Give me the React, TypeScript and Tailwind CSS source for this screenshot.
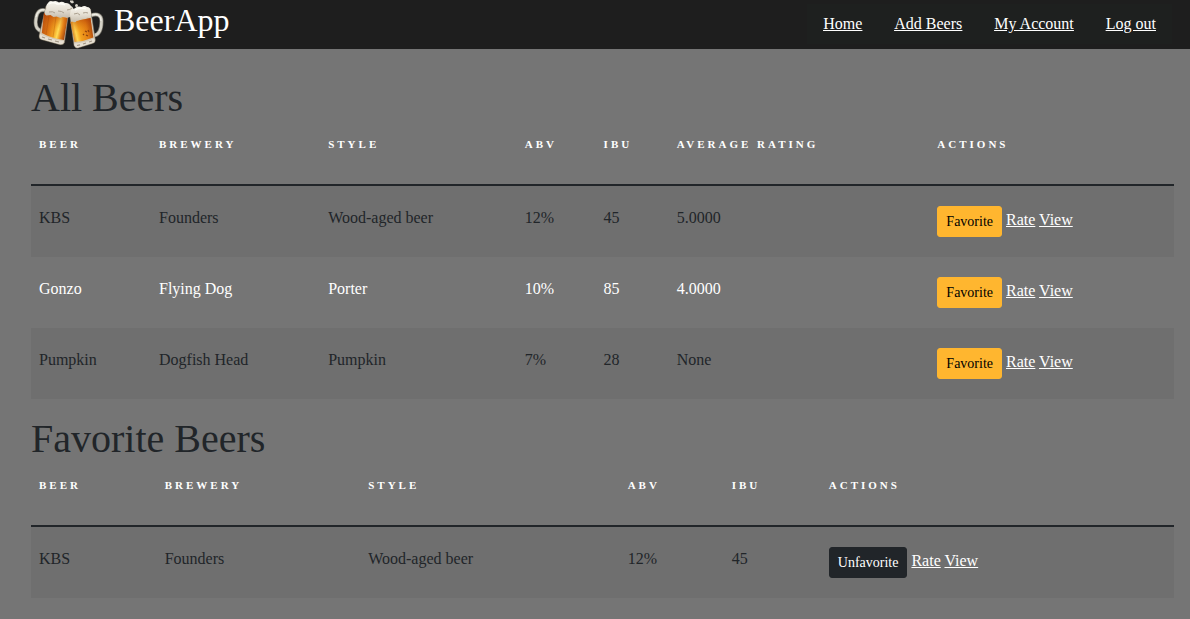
import React from "react";

type Beer = { name: string; brewery: string; style: string; abv: string; ibu: string; rating?: string };

const allBeers: Beer[] = [
  { name: "KBS", brewery: "Founders", style: "Wood-aged beer", abv: "12%", ibu: "45", rating: "5.0000" },
  { name: "Gonzo", brewery: "Flying Dog", style: "Porter", abv: "10%", ibu: "85", rating: "4.0000" },
  { name: "Pumpkin", brewery: "Dogfish Head", style: "Pumpkin", abv: "7%", ibu: "28", rating: "None" },
];

const favoriteBeers: Beer[] = [
  { name: "KBS", brewery: "Founders", style: "Wood-aged beer", abv: "12%", ibu: "45" },
];

function BeerMugs() {
  return (
    <svg viewBox="0 0 72 49" className="h-[49px] w-[72px] shrink-0" aria-hidden="true">
      <defs>
        <linearGradient id="ale-left" gradientUnits="userSpaceOnUse" x1="10" y1="24" x2="34" y2="30">
          <stop offset="0" stopColor="#b9500f" />
          <stop offset=".3" stopColor="#dc7413" />
          <stop offset=".55" stopColor="#f2a422" />
          <stop offset=".7" stopColor="#ffdc55" />
          <stop offset=".84" stopColor="#e8861a" />
          <stop offset="1" stopColor="#a84a10" />
        </linearGradient>
        <linearGradient id="ale-right" gradientUnits="userSpaceOnUse" x1="39" y1="33" x2="60" y2="28">
          <stop offset="0" stopColor="#c96512" />
          <stop offset=".22" stopColor="#ffd552" />
          <stop offset=".4" stopColor="#f4a31f" />
          <stop offset=".75" stopColor="#e17d13" />
          <stop offset="1" stopColor="#ad480c" />
        </linearGradient>
        <linearGradient id="ale-shade" x1="0" y1="0" x2="0" y2="1">
          <stop offset="0" stopColor="#b03c08" stopOpacity=".6" />
          <stop offset=".6" stopColor="#e07a10" stopOpacity="0" />
        </linearGradient>
        <linearGradient id="foam" x1="0" y1="0" x2="0" y2="1">
          <stop offset="0" stopColor="#f8f6ef" />
          <stop offset=".5" stopColor="#e6e0d4" />
          <stop offset="1" stopColor="#c4bbac" />
        </linearGradient>
      </defs>

      <path d="M14 10.500C9 9 5.500 11 4.300 17c-1.500 7-.3 12.500 5 14" fill="none" stroke="#77746b" strokeWidth="4" />
      <path d="M14 10.500C9 9 5.500 11 4.300 17c-1.500 7-.3 12.500 5 14" fill="none" stroke="#d5d2c7" strokeWidth="2.600" />
      <path d="M13 10C9 9 5.500 11 4 17" fill="none" stroke="#f6f5ee" strokeWidth="1" />
      <path d="M14 6 37 10 32.500 42.500Q31.500 45.500 28 44.700L9 39.500Q6.500 38.500 7.200 35z" fill="#d4c8b3" stroke="#756c5c" strokeWidth=".5" />
      <path d="M12 13 35.500 18 32 40Q20 38.500 9.800 33z" fill="url(#ale-left)" />
      <path d="M12 13 35.500 18 32 40Q20 38.500 9.800 33z" fill="url(#ale-shade)" />
      <path d="m17 16-3 19M24 17l-3 20" stroke="#9e4309" strokeWidth=".8" strokeOpacity=".35" />
      <path d="M8 34q12 6 24 7l-1 2q-1 2-4 1L9 39q-2-1-1-5z" fill="#e6dfd2" />
      <path d="m10 37 3 1m3 1 4 1m3 1 4 1" stroke="#a09483" strokeWidth="1.200" />

      <path d="M59 15.500C65 13 69.500 15 69.500 21c0 8-2 14-8 14.500" fill="none" stroke="#77746b" strokeWidth="4" />
      <path d="M59 15.500C65 13 69.500 15 69.500 21c0 8-2 14-8 14.500" fill="none" stroke="#d5d2c7" strokeWidth="2.600" />
      <path d="M60 15C65 13.500 69 15 69 21" fill="none" stroke="#f6f5ee" strokeWidth="1" />
      <path d="M37.500 14 58.500 9 63.300 39.500Q63.700 42.500 60.500 43.500L46 48Q43 48.700 42 45.500z" fill="#d4c8b3" stroke="#756c5c" strokeWidth=".5" />
      <path d="M38.500 22 58.500 18 61.300 37.500Q52 41.500 42.500 42z" fill="url(#ale-right)" />
      <path d="M38.500 22 58.500 18 61.300 37.500Q52 41.500 42.500 42z" fill="url(#ale-shade)" />
      <path d="M42 43.500q11-.5 20-5l.8 2q.2 2-2.300 2.500L46 47.500q-3 .5-4-4z" fill="#e6dfd2" />
      <path d="m45 45.500 3-.7m3-.8 3-1m3-1 3-1" stroke="#a09483" strokeWidth="1.200" />
      <path d="m53 31 2 1m1-2 1 2m-3 3 2 1m-5-2 1 1" stroke="#8a410e" strokeWidth="1.200" />

      <path d="M14.500 9q-1-4 1.500-6 1.500-3 5-1.500Q24 0 27 2.500q3-1.500 6 .5 4-.5 6 3 3.500 2 2 5.500.5 5-4.500 6l-5-1-3 1.500-4-1.500-3 .5-3-2-4 .5q-3-1-1-5.500z" fill="url(#foam)" />
      <path d="M17 12q4-1 6 1m3-2q4 0 6 2m3-3q3 0 5-2" fill="none" stroke="#aba08f" strokeWidth="1" />
      <path d="M17 4q4-3 8 0 5-1 8 1" fill="none" stroke="#fffef9" strokeWidth="1.500" />
      <path d="M38.500 12q0-3 4-3.500 3-3 7-1.500 3-2 5.500 0 3.500 0 3.500 3.500l1 5q-1 3-4 1.500-2 3-5 1l-3 2-3 1q-1 2-3 1-2.500-1-2-4-2.500-2-1-6z" fill="url(#foam)" />
      <path d="M42 14q4-2 6 1m3-2q3-1 5 0" fill="none" stroke="#aba08f" strokeWidth="1" />
      <path d="M43 10q5-3 11-1" fill="none" stroke="#fffef9" strokeWidth="1.300" />
      <path d="M38 .5h3l1 2-2 1-2-1.500z" fill="#d8d3c9" />
      <circle cx="44.500" cy="5.500" r="1.500" fill="#d8d3c9" />
    </svg>
  );
}

function BeerTable({ id, beers, favorites = false }: { id: string; beers: Beer[]; favorites?: boolean }) {
  const headings = favorites
    ? ["Beer", "Brewery", "Style", "ABV", "IBU", "Actions"]
    : ["Beer", "Brewery", "Style", "ABV", "IBU", "Average Rating", "Actions"];
  const columns = favorites
    ? ["w-[11%]", "w-[17.8%]", "w-[22.7%]", "w-[9.1%]", "w-[8.5%]", "w-auto"]
    : ["w-[10.5%]", "w-[14.8%]", "w-[17.2%]", "w-[6.9%]", "w-[6.4%]", "w-[22.8%]", "w-auto"];
  return (
    <table aria-labelledby={id} className="mt-2 w-full table-fixed border-separate border-spacing-0 text-left">
      <colgroup>{columns.map((width, i) => <col key={i} className={width} />)}</colgroup>
      <thead>
        <tr>
          {headings.map((heading) => (
            <th key={heading} scope="col" className="border-b-2 border-[#212529] px-2 pt-1.5 pb-8 text-[11px] leading-4 font-bold tracking-[3px] whitespace-nowrap text-white uppercase">
              {heading}
            </th>
          ))}
        </tr>
      </thead>
      <tbody>
        {beers.map((beer) => (
          <tr key={beer.name} className="align-top text-[#212529] odd:bg-[#6f6f6f] even:text-white">
            <td className="px-2 py-5">{beer.name}</td>
            <td className="px-2 py-5">{beer.brewery}</td>
            <td className="px-2 py-5">{beer.style}</td>
            <td className="px-2 py-5">{beer.abv}</td>
            <td className="px-2 py-5">{beer.ibu}</td>
            {!favorites && <td className="px-2 py-5">{beer.rating}</td>}
            <td className="px-2 py-5 whitespace-nowrap text-white">
              <button type="button" className={favorites
                ? "rounded-[3px] border border-[#212529] bg-[#212529] px-2 align-middle text-sm leading-[29px] text-white"
                : "rounded-[3px] border border-[#ffb62f] bg-[#ffb62f] px-2 align-middle text-sm leading-[29px] text-black"}>
                {favorites ? "Unfavorite" : "Favorite"}
              </button>{" "}
              <a href="#rate" className="underline">Rate</a>{" "}
              <a href="#view" className="underline">View</a>
            </td>
          </tr>
        ))}
      </tbody>
    </table>
  );
}

export default function App() {
  return (
    <div className="min-h-screen bg-[#757575] font-['Liberation_Serif',serif] text-base leading-6">
      <header className="flex items-start justify-between bg-[#1e1e1e] pr-[18px] pl-8">
        <a href="#home" className="flex items-start gap-2.5 text-white">
          <BeerMugs />
          <span className="text-[32px] leading-10">BeerApp</span>
        </a>
        <nav className="mt-1 flex gap-8 bg-[#1e201f] px-4 py-2 text-white underline">
          <a href="#home">Home</a>
          <a href="#add">Add Beers</a>
          <a href="#account">My Account</a>
          <a href="#logout">Log out</a>
        </nav>
      </header>
      <main className="flex flex-col gap-4 pt-[25px] pr-4 pb-5 pl-[31px]">
        <section>
          <h1 id="all-beers" className="text-[40px] leading-[48px] text-[#212529]">All Beers</h1>
          <BeerTable id="all-beers" beers={allBeers} />
        </section>
        <section>
          <h1 id="favorite-beers" className="text-[40px] leading-[48px] text-[#212529]">Favorite Beers</h1>
          <BeerTable id="favorite-beers" beers={favoriteBeers} favorites />
        </section>
      </main>
    </div>
  );
}
